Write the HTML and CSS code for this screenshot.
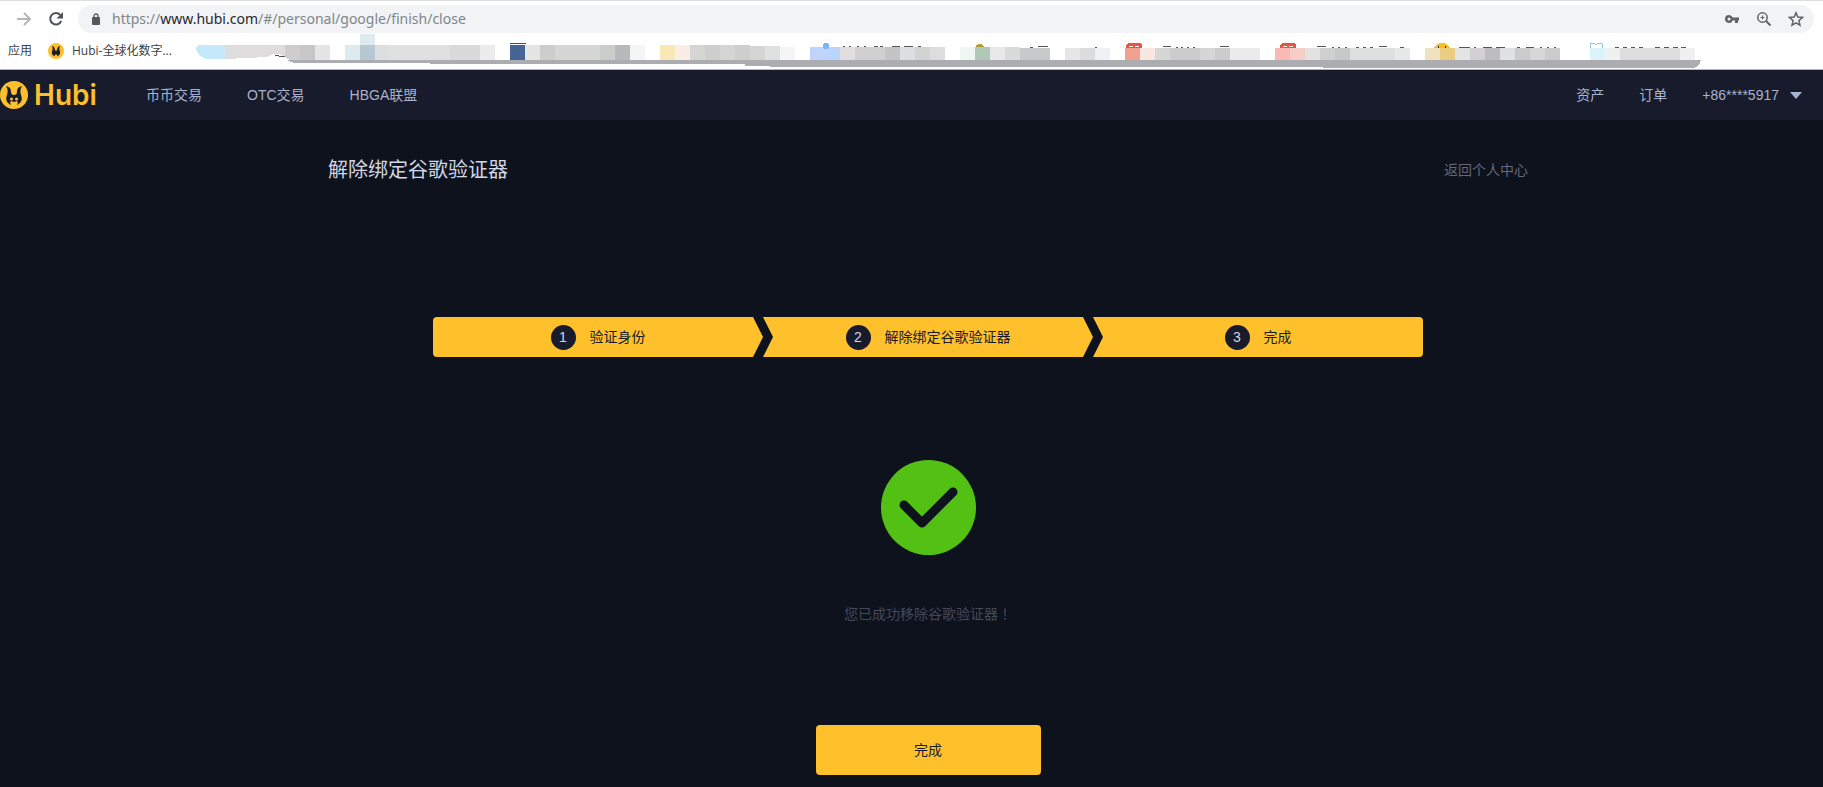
FILE: index.html
```
<!DOCTYPE html>
<html lang="zh-CN">

<head>
    <meta charset="UTF-8">
    <meta name="viewport" content="width=device-width, initial-scale=1.0">
    <title>Hubi-全球化数字资产交易平台</title>
    <link rel="stylesheet" href="styles.css">
</head>

<body>

    <div class="browser">
        <div class="toolbar">
            <button class="tool" aria-label="前进">
                <svg width="16" height="16" viewBox="0 0 16 16" fill="none" stroke="#b4b6b9" stroke-width="2"><path d="M1 8h13M8 2l6 6-6 6"/></svg>
            </button>
            <button class="tool" aria-label="刷新">
                <svg width="16" height="16" viewBox="0 0 16 16"><path d="M13.2 10a5.7 5.7 0 1 1-1-6" fill="none" stroke="#505357" stroke-width="2"/><path d="M15 1v6.500H8.500z" fill="#505357"/></svg>
            </button>
            <div class="address">
                <svg width="10" height="12" viewBox="0 0 10 12"><rect x="1" y="4" width="8" height="8" rx="1" fill="#55585c"/><path d="M3 5V3a2 2 0 0 1 4 0v2" fill="none" stroke="#55585c" stroke-width="1.300"/></svg>
                <span class="url">https://<b>www.hubi.com</b>/#/personal/google/finish/close</span>
                <button class="tool" aria-label="密码">
                    <svg width="16" height="16" viewBox="0 0 16 16"><path d="M5 4a4 4 0 1 0 3.700 5.500H11V12h3V9.500h1v-3H8.700A4 4 0 0 0 5 4zm0 2.500a1.500 1.500 0 1 1 0 3 1.500 1.500 0 0 1 0-3z" fill="#5f6368"/></svg>
                </button>
                <button class="tool" aria-label="缩放">
                    <svg width="16" height="16" viewBox="0 0 16 16" fill="none" stroke="#5f6368"><circle cx="6.500" cy="6.500" r="4.700" stroke-width="1.500"/><path d="M10 10l4.500 4.500" stroke-width="2"/><path d="M4.500 6.500h4M6.500 4.500v4"/></svg>
                </button>
                <button class="tool" aria-label="收藏">
                    <svg width="16" height="16" viewBox="0 0 16 16"><path d="M8 1.800l1.800 4.300 4.700.4-3.600 3.100 1.100 4.600L8 11.800l-4 2.400 1.100-4.600-3.600-3.100 4.700-.4z" fill="none" stroke="#5f6368" stroke-width="1.500"/></svg>
                </button>
            </div>
        </div>

        <div class="bookmarks">
            <a href="#">应用</a>
            <a href="#">
                <svg width="16" height="16" viewBox="0 0 28 28"><circle cx="14" cy="14" r="14" fill="#fdbf2b"/><path d="M7 5c4 1 5 4 5 8h4c0-4 1-7 5-8-2 4-1 7 0 10 1 4-1 7-5 8v-3h-4v3c-4-1-6-4-5-8 1-3 2-6 0-10z" fill="#171b2b"/></svg>
                Hubi-全球化数字...
            </a>
            <svg class="mosaic" width="1511" height="36" viewBox="190 33 1511 36" shape-rendering="crispEdges">
                <path d="M225 45h-26q-4 2-2 6 3 8 12 8h16z" fill="#c6e8fb"/>
                <path d="M225 45h60v12l-6-3h-6l-6 3-20 1-22 1z" fill="#dedcdc"/>
                <path d="M285 45h15v15h-10l-5-3z" fill="#cecccd"/>
                <path d="M275 55h2l2 1h5v1" fill="none" stroke="#555"/>
                <path d="M300 45h15v15h-15z" fill="#c8c7c8"/>
                <path d="M315 45h15v15h-15zM525 45h15v15h-15z" fill="#e5e5e5"/>
                <path d="M345 45h15v15h-15zM360 34h15v11h-15z" fill="#dfe9f0"/>
                <path d="M360 45h15v15h-15z" fill="#b6c8d2"/>
                <path d="M375 45h15v15h-15z" fill="#dbdfe2"/>
                <path d="M390 45h60v15h-60z" fill="#e0e0e0"/>
                <path d="M450 45h30v15h-30z" fill="#dadada"/>
                <path d="M480 45h15v15h-15z" fill="#ececec"/>
                <path d="M510 45h15v15h-15z" fill="#456596"/>
                <path d="M510 43h16v1h-16z" fill="#34507c"/>
                <path d="M540 45h15v15h-15z" fill="#cdcdcc"/>
                <path d="M555 45h45v15h-45z" fill="#d6d6d5"/>
                <path d="M600 45h15v15h-15z" fill="#cbcdcb"/>
                <path d="M615 45h15v15h-15z" fill="#b8b9bc"/>
                <path d="M630 45h15v15h-15zM780 47h15v13h-15z" fill="#f5f5f5"/>
                <path d="M660 45h15v15h-15z" fill="#f9e7b6"/>
                <path d="M675 45h15v15h-15z" fill="#f9eee6"/>
                <path d="M690 45h15v15h-15zM720 45h15v15h-15zM750 46h15v14h-15z" fill="#d5d5d4"/>
                <path d="M705 45h15v15h-15zM735 45h15v15h-15z" fill="#cececd"/>
                <path d="M765 46h15v14h-15z" fill="#dfe1e1"/>
                <path d="M810 47h20v13h-20z" fill="#bfd3fb"/>
                <path d="M830 47h10v13h-10z" fill="#b8d6fb"/>
                <circle cx="826" cy="46" r="3" fill="#7db4f5"/>
                <path d="M840 47h15v13h-15z" fill="#e2dedf"/>
                <path d="M855 47h30v13h-30z" fill="#d0d0d0"/>
                <path d="M885 47h15v13h-15z" fill="#c4c4c4"/>
                <path d="M900 47h15v13h-15z" fill="#dcdee2"/>
                <path d="M915 47h15v13h-15z" fill="#d3d3d3"/>
                <path d="M930 47h15v13h-15z" fill="#dddddd"/>
                <path d="M960 47h15v13h-15z" fill="#eef7f1"/>
                <path d="M976 47v-2h2v-1h4l2 3z" fill="#b99b34"/>
                <path d="M975 47h15v13h-15z" fill="#b0c8b8"/>
                <path d="M990 47h15v13h-15z" fill="#e8e8e8"/>
                <path d="M1005 47h15v13h-15z" fill="#dadada"/>
                <path d="M1020 48h30v12h-30z" fill="#c7c9ca"/>
                <path d="M1065 48h15v12h-15z" fill="#e6e6e6"/>
                <path d="M1080 48h15v12h-15z" fill="#dcdcdc"/>
                <path d="M1095 48h15v12h-15z" fill="#eef2f4"/>
                <path d="M1126 48v-3l2-2h12l2 2v3zM1280 48v-3l2-2h12l2 2v3z" fill="#e4573f"/>
                <path d="M1129 46h4M1135 46h4M1283 46h4M1289 46h4" stroke="#fff"/>
                <path d="M1125 48h15v12h-15z" fill="#f2a190"/>
                <path d="M1140 48h15v12h-15z" fill="#fae7e3"/>
                <path d="M1155 48h15v12h-15zM1200 48h15v12h-15z" fill="#d6d6d6"/>
                <path d="M1170 48h30v12h-30zM1215 48h15v12h-15z" fill="#cccccc"/>
                <path d="M1230 48h30v12h-30z" fill="#ebebeb"/>
                <path d="M1275 48h15v12h-15z" fill="#f9b9b4"/>
                <path d="M1290 48h15v12h-15z" fill="#f6cdc8"/>
                <path d="M1305 48h15v12h-15z" fill="#e4e2df"/>
                <path d="M1320 48h15v12h-15z" fill="#d0d0d0"/>
                <path d="M1335 48h15v12h-15z" fill="#c5c7c9"/>
                <path d="M1350 48h45v12h-45z" fill="#dedfdf"/>
                <path d="M1395 48h15v12h-15z" fill="#e7e7e7"/>
                <path d="M1434 48q2-5 8-5t8 5z" fill="#f9bd25"/>
                <path d="M1438 46h1v2h-1zM1445 46h1v2h-1z" fill="#2b2615"/>
                <path d="M1425 48h15v12h-15z" fill="#f0e2bf"/>
                <path d="M1440 48h15v12h-15z" fill="#e9ce82"/>
                <path d="M1455 48h15v12h-15z" fill="#e4e4e4"/>
                <path d="M1470 48h15v12h-15z" fill="#d2d0d2"/>
                <path d="M1485 48h15v12h-15z" fill="#bebcbe"/>
                <path d="M1500 48h15v12h-15z" fill="#dfe1e6"/>
                <path d="M1515 48h15v12h-15zM1545 48h15v12h-15z" fill="#cccbcc"/>
                <path d="M1530 48h15v12h-15z" fill="#d8d7d8"/>
                <path d="M1590 48v-4l4-1 2 2 2-2 4 1v4" fill="none" stroke="#8ccbdc"/>
                <path d="M1590 48h15v12h-15z" fill="#dcf3fa"/>
                <path d="M1605 48h15v12h-15zM1680 48h15v12h-15z" fill="#f0f0f0"/>
                <path d="M1620 48h60v12h-60z" fill="#dedddd"/>
                <path d="M843 46h2M849 46h2M857 46h2M864 46h2M874 46h4M880 46h3M892 46h8M904 46h9M918 46h3M1030 47h3M1038 46h10M1095 47h2M1163 46h8M1176 47h2M1181 47h2M1187 47h2M1193 47h2M1220 46h9M1317 46h9M1332 47h2M1338 47h2M1345 47h2M1356 47h3M1363 47h3M1370 47h3M1379 46h8M1400 47h4M1459 47h11M1474 47h2M1483 47h9M1496 47h9M1517 47h3M1526 47h8M1540 47h2M1547 47h2M1554 47h2M1615 47h4M1623 47h4M1631 47h4M1639 47h4M1655 47h5M1664 47h5M1673 47h5M1681 47h5" stroke="#555"/>
                <path d="M287 60H1701q-2 8-10 8H1324l-3-1H795l-50-1v-2H430v-1H297q-6 0-10-3z" fill="#acadb1"/>
            </svg>
        </div>
    </div>

    <header class="header">
        <a class="logo" href="#">
            <svg width="28" height="28" viewBox="0 0 28 28"><circle cx="14" cy="14" r="14" fill="#fdbf2b"/><path d="M6 5c4 1 5 3 5 6 0 2 1 3 3 3s3-1 3-3c0-3 1-5 5-6-2 3-2 6-1 9 2 5 0 8-4 10 1-2 1-3 0-4-1 1-5 1-6 0-1 1-1 2 0 4-4-2-6-5-4-10 1-3 1-6-1-9z" fill="#171b2b"/><circle cx="11.500" cy="18" r="1.500" fill="#fdbf2b"/><circle cx="16.500" cy="18" r="1.500" fill="#fdbf2b"/></svg>
            <span>Hubi</span>
        </a>
        <nav class="menu">
            <a href="#">币币交易</a>
            <a href="#">OTC交易</a>
            <a href="#">HBGA联盟</a>
        </nav>
        <nav class="account">
            <a href="#">资产</a>
            <a href="#">订单</a>
            <button class="user">+86****5917 <span class="caret"></span></button>
        </nav>
    </header>

    <main class="main">
        <div class="title-bar">
            <h1>解除绑定谷歌验证器</h1>
            <a href="#">返回个人中心</a>
        </div>

        <ol class="steps">
            <li><span class="num">1</span>验证身份</li>
            <li><span class="num">2</span>解除绑定谷歌验证器</li>
            <li><span class="num">3</span>完成</li>
        </ol>

        <div class="result">
            <svg width="95" height="95" viewBox="0 0 95 95"><circle cx="47.500" cy="47.500" r="47.500" fill="#52c114"/><path d="M23 45l18 18 31-31" fill="none" stroke="#0e121c" stroke-width="9" stroke-linecap="round" stroke-linejoin="round"/></svg>
            <p>您已成功移除谷歌验证器<span class="mark" lang="zh-TW">！</span></p>
            <button class="finish">完成</button>
        </div>
    </main>

</body>

</html>
```

FILE: styles.css
```
body {
    margin: 0;
    background-color: #0e121c;
    font-family: "Liberation Sans", "Noto Sans CJK SC", sans-serif;
    font-size: 14px;
    line-height: 20px;
}

a {
    color: inherit;
    text-decoration: none;
}

button {
    padding: 0;
    border: none;
    background: none;
    color: inherit;
    font: inherit;
    cursor: pointer;
}

svg {
    display: block;
    flex-shrink: 0;
}

/* Browser */
.browser {
    background-color: #fff;
    border-top: 1px solid #dcdddf;
    border-bottom: 1px solid #b4b5ba;
    overflow: hidden;
}

.toolbar {
    display: flex;
    align-items: center;
    gap: 16px;
    padding: 4px 9px 0 16px;
}

.address {
    display: flex;
    flex: 1;
    align-items: center;
    gap: 16px;
    height: 28px;
    margin-left: -2px;
    padding: 0 10px 0 13px;
    border-radius: 14px;
    background-color: #f1f3f4;
}

.url {
    flex: 1;
    margin-left: -5px;
    color: #80868b;
    font-family: "Noto Sans", sans-serif;
    font-size: 14px;
}

.url b {
    color: #26282b;
    font-weight: normal;
}

.bookmarks {
    display: flex;
    align-items: center;
    height: 36px;
    padding-left: 8px;
    gap: 16px;
    color: #3c4043;
    font-family: "Open Sans", "Noto Sans CJK SC", sans-serif;
    font-size: 12px;
    white-space: nowrap;
}

.bookmarks a {
    display: flex;
    align-items: center;
    gap: 8px;
}

.mosaic {
    margin-left: 2px;
}

/* Header */
.header {
    display: flex;
    align-items: center;
    height: 50px;
    padding-right: 21px;
    background-color: #171b2b;
    color: #a9b2d0;
}

.logo {
    display: flex;
    align-items: center;
    gap: 6px;
    width: 146px;
    color: #fdbf2b;
    font-family: Inter, sans-serif;
    font-size: 28px;
    font-weight: 600;
}

.menu {
    display: flex;
    flex: 1;
    gap: 45px;
}

.account {
    display: flex;
    gap: 35px;
}

.user {
    display: flex;
    align-items: center;
    gap: 11px;
}

.caret {
    border: 6px solid transparent;
    border-top: 7px solid #a9b2d0;
    border-bottom: none;
}

/* Content */
.main {
    padding: 0 0 12px 33px;
    border-bottom: 1px solid #05040d;
}

.title-bar {
    display: flex;
    align-items: center;
    justify-content: space-between;
    max-width: 1200px;
    height: 100px;
    margin: 0 auto;
    color: #62677a;
}

.title-bar h1 {
    margin: 0;
    color: #d2d7e6;
    font-size: 20px;
    font-weight: normal;
}

.steps {
    display: flex;
    max-width: 990px;
    margin: 97px auto 103px;
    padding: 0;
    border-radius: 4px;
    overflow: hidden;
    list-style: none;
}

.steps li {
    display: flex;
    flex: 1;
    align-items: center;
    justify-content: center;
    gap: 14px;
    height: 40px;
    background-color: #ffc12b;
    color: #171b2b;
    clip-path: polygon(0 0, calc(100% - 10px) 0, 100% 50%, calc(100% - 10px) 100%, 0 100%, 10px 50%);
}

.steps li:first-child {
    clip-path: polygon(0 0, calc(100% - 10px) 0, 100% 50%, calc(100% - 10px) 100%, 0 100%);
}

.steps li:last-child {
    clip-path: polygon(0 0, 100% 0, 100% 100%, 0 100%, 10px 50%);
}

.num {
    width: 25px;
    border-radius: 50%;
    background-color: #171b2b;
    color: #d2d7e6;
    line-height: 25px;
    text-align: center;
}

.result {
    display: flex;
    flex-direction: column;
    align-items: center;
    color: #444858;
}

.result p {
    margin: 48px 0 101px;
}

.mark {
    font-family: "Noto Sans CJK TC", sans-serif;
}

.finish {
    width: 225px;
    height: 50px;
    border-radius: 4px;
    background-color: #ffc12b;
    color: #171b2b;
}
```
